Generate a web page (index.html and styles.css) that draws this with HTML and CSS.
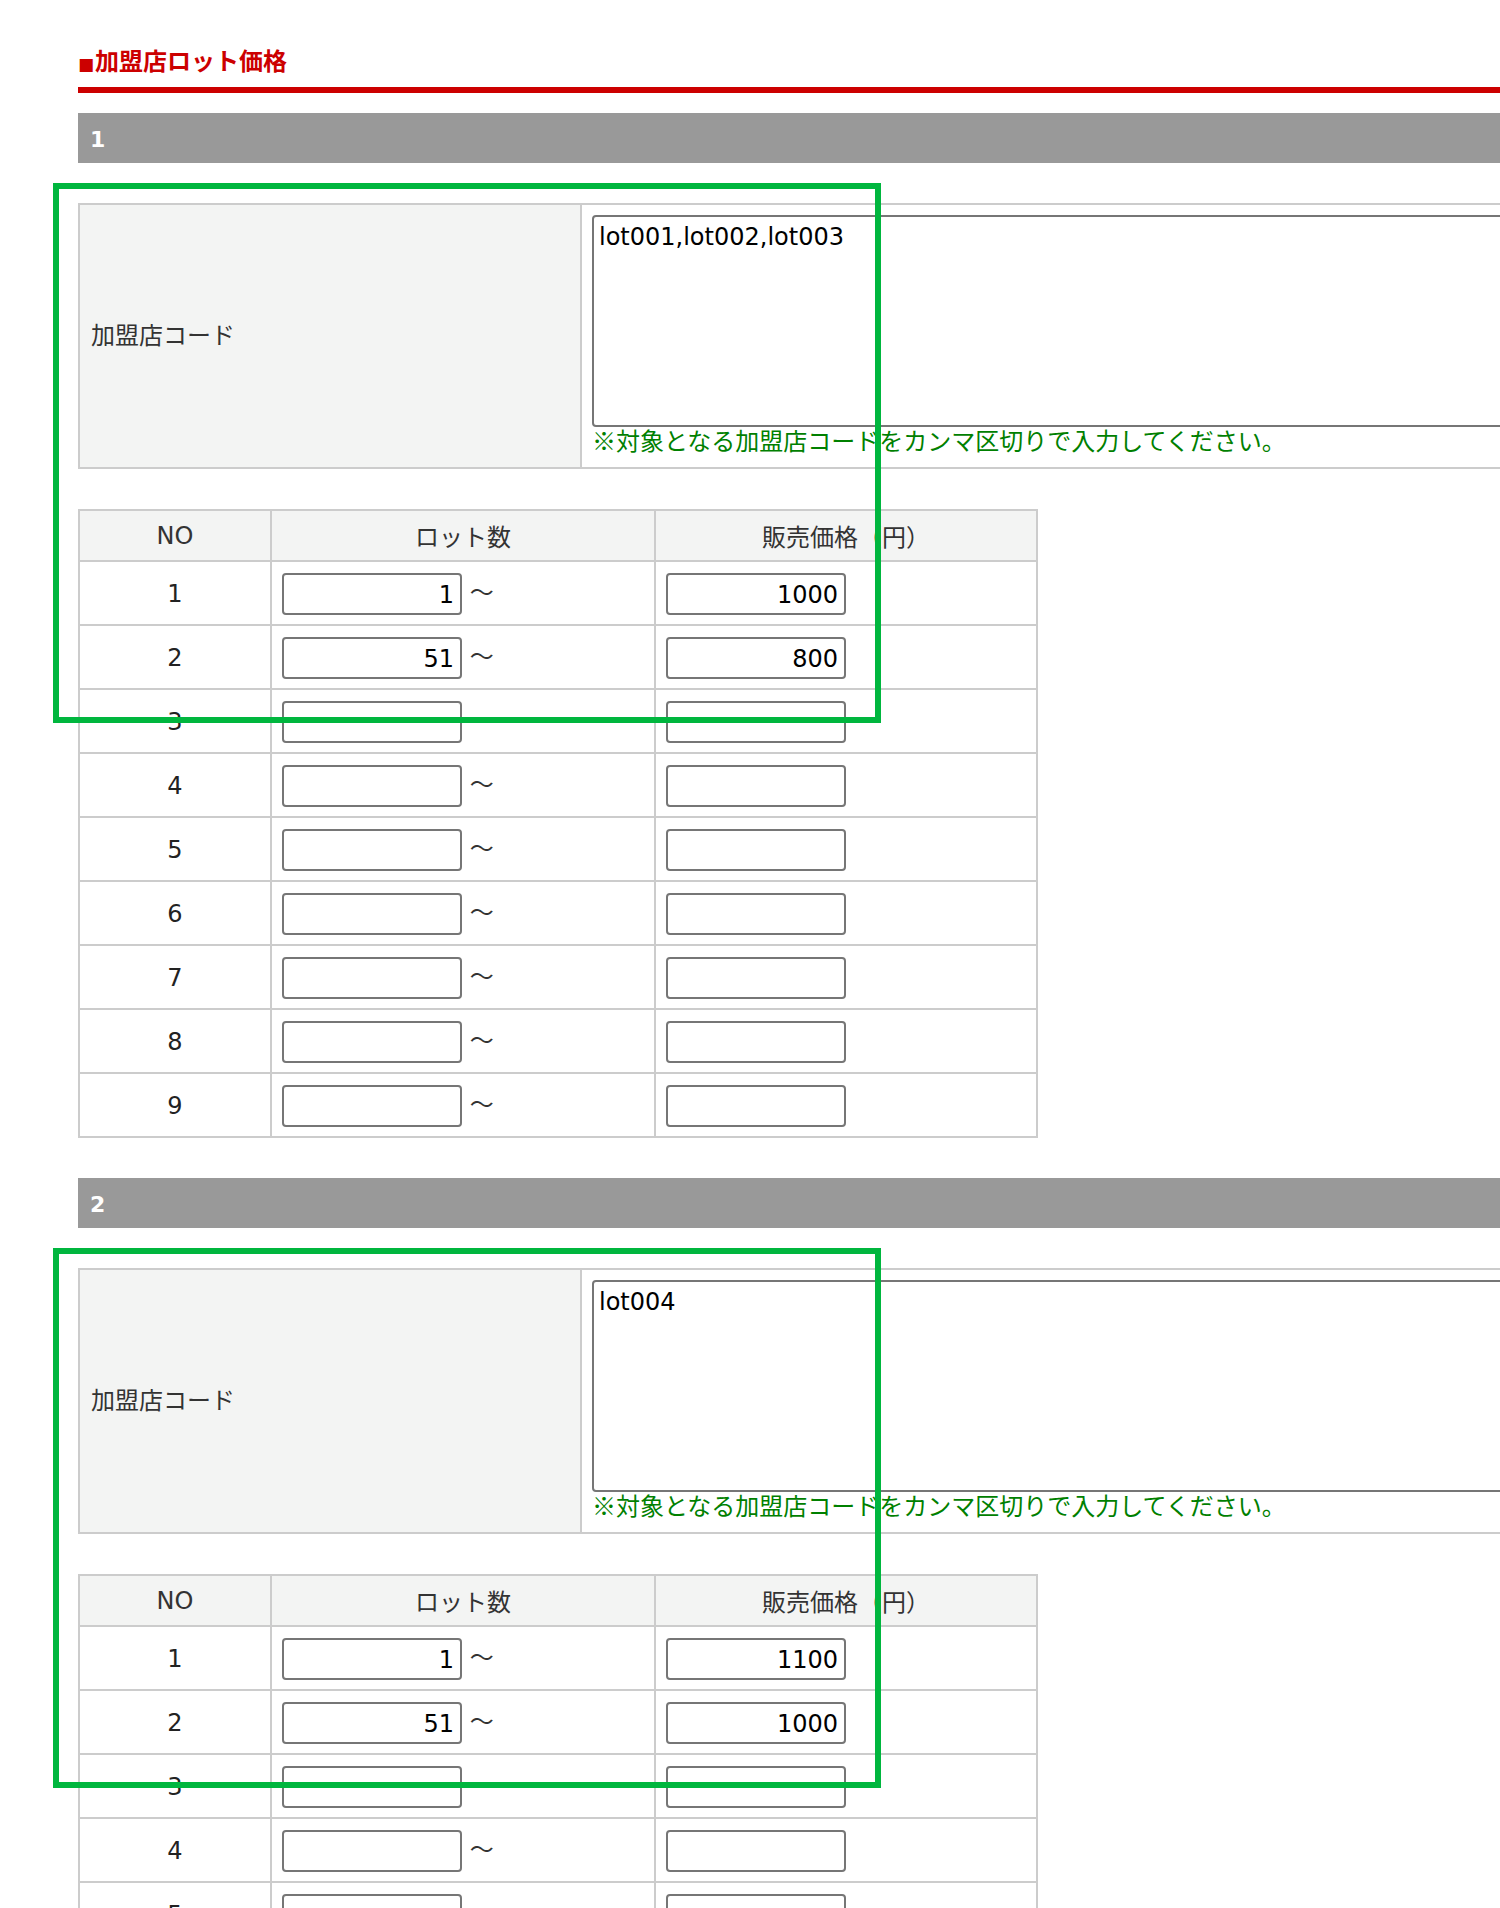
FILE: index.html
```html
<!DOCTYPE html>
<html lang="ja">
<head>
    <meta charset="UTF-8">
    <meta name="viewport" content="width=device-width, initial-scale=1.0">
    <title>加盟店ロット価格</title>
    <link rel="stylesheet" href="styles.css">
</head>
<body>
<div class="page">

    <!-- Title -->
    <h2 class="page-title"><span class="mark">■</span>加盟店ロット価格</h2>

    <!-- Group 1 -->
    <div class="group-head">1</div>
    <div class="block">
        <table class="info-table">
            <tr>
                <th>加盟店コード</th>
                <td>
                    <textarea class="codes">lot001,lot002,lot003</textarea>
                    <p class="note">※対象となる加盟店コードをカンマ区切りで入力してください。</p>
                </td>
            </tr>
        </table>

        <table class="lot-table">
            <tr>
                <th class="col-no">NO</th>
                <th class="col-lot">ロット数</th>
                <th>販売価格（円）</th>
            </tr>
            <tr><td class="no">1</td><td><input type="text" class="num" value="1"> 〜</td><td><input type="text" class="num" value="1000"></td></tr>
            <tr><td class="no">2</td><td><input type="text" class="num" value="51"> 〜</td><td><input type="text" class="num" value="800"></td></tr>
            <tr><td class="no">3</td><td><input type="text" class="num"> 〜</td><td><input type="text" class="num"></td></tr>
            <tr><td class="no">4</td><td><input type="text" class="num"> 〜</td><td><input type="text" class="num"></td></tr>
            <tr><td class="no">5</td><td><input type="text" class="num"> 〜</td><td><input type="text" class="num"></td></tr>
            <tr><td class="no">6</td><td><input type="text" class="num"> 〜</td><td><input type="text" class="num"></td></tr>
            <tr><td class="no">7</td><td><input type="text" class="num"> 〜</td><td><input type="text" class="num"></td></tr>
            <tr><td class="no">8</td><td><input type="text" class="num"> 〜</td><td><input type="text" class="num"></td></tr>
            <tr><td class="no">9</td><td><input type="text" class="num"> 〜</td><td><input type="text" class="num"></td></tr>
        </table>

        <!-- highlight frame -->
        <div class="highlight"></div>
    </div>

    <!-- Group 2 -->
    <div class="group-head">2</div>
    <div class="block">
        <table class="info-table">
            <tr>
                <th>加盟店コード</th>
                <td>
                    <textarea class="codes">lot004</textarea>
                    <p class="note">※対象となる加盟店コードをカンマ区切りで入力してください。</p>
                </td>
            </tr>
        </table>

        <table class="lot-table">
            <tr>
                <th class="col-no">NO</th>
                <th class="col-lot">ロット数</th>
                <th>販売価格（円）</th>
            </tr>
            <tr><td class="no">1</td><td><input type="text" class="num" value="1"> 〜</td><td><input type="text" class="num" value="1100"></td></tr>
            <tr><td class="no">2</td><td><input type="text" class="num" value="51"> 〜</td><td><input type="text" class="num" value="1000"></td></tr>
            <tr><td class="no">3</td><td><input type="text" class="num"> 〜</td><td><input type="text" class="num"></td></tr>
            <tr><td class="no">4</td><td><input type="text" class="num"> 〜</td><td><input type="text" class="num"></td></tr>
            <tr><td class="no">5</td><td><input type="text" class="num"> 〜</td><td><input type="text" class="num"></td></tr>
            <tr><td class="no">6</td><td><input type="text" class="num"> 〜</td><td><input type="text" class="num"></td></tr>
            <tr><td class="no">7</td><td><input type="text" class="num"> 〜</td><td><input type="text" class="num"></td></tr>
            <tr><td class="no">8</td><td><input type="text" class="num"> 〜</td><td><input type="text" class="num"></td></tr>
            <tr><td class="no">9</td><td><input type="text" class="num"> 〜</td><td><input type="text" class="num"></td></tr>
        </table>

        <div class="highlight"></div>
    </div>

</div>
</body>
</html>
```

FILE: styles.css
```css
/* General page styles */
html, body {
    margin: 0;
    padding: 0;
    background: #fff;
    color: #333;
    font-family: "DejaVu Sans", "Noto Sans CJK JP", sans-serif;
    font-size: 24px;
    overflow: hidden; /* the page is wider than the window */
}

.page {
    width: 1700px;
    padding: 42px 0 0 78px;
}

/* Title */
.page-title {
    margin: 0;
    padding-bottom: 9px;
    border-bottom: 6px solid #cc0000;
    color: #cc0000;
    font-family: "Noto Sans CJK JP", sans-serif;
    font-size: 24px;
    line-height: 36px;
    font-weight: bold;
}

.page-title .mark {
    font-family: "DejaVu Sans", sans-serif;
    font-size: 17px;
    line-height: 1;
    margin-right: 1px;
}

/* Grey group bar */
.group-head {
    margin-top: 20px;
    height: 50px;
    line-height: 53px;
    padding-left: 12px;
    background: #999;
    color: #fff;
    font-size: 22px;
    font-weight: bold;
}

.block {
    position: relative;
    margin-top: 40px;
    margin-bottom: 40px;
}

.block + .group-head {
    margin-top: 0;
}

/* Tables */
table {
    border-collapse: separate;
    border-spacing: 0;
    border-top: 2px solid #ccc;
    border-left: 2px solid #ccc;
}

th, td {
    border-right: 2px solid #ccc;
    border-bottom: 2px solid #ccc;
    font-weight: normal;
    padding: 0;
}

th {
    background: #f3f4f3;
}

/* Shop code table */
.info-table {
    width: 1600px;
}

.info-table th {
    width: 502px;
    box-sizing: border-box;
    text-align: left;
    vertical-align: middle;
    padding-left: 11px;
    padding-bottom: 6px;
    font-family: "Noto Sans CJK JP", sans-serif;
}

.info-table td {
    padding: 10px 10px 14px 10px;
    vertical-align: top;
}

.codes {
    display: block;
    width: 100%;
    height: 212px;
    box-sizing: border-box;
    margin: 0;
    padding: 6px 5px;
    border: 2px solid #767676;
    border-radius: 4px;
    font-family: "DejaVu Sans", "Noto Sans CJK JP", sans-serif;
    font-size: 24px;
    color: #000;
    resize: none;
}

.note {
    margin: 0;
    line-height: 26px;
    color: #008000;
    font-family: "Noto Sans CJK JP", sans-serif;
}

/* Lot price table */
.lot-table {
    margin-top: 40px;
    width: 960px;
    table-layout: fixed;
    box-sizing: border-box;
}

.lot-table th {
    height: 51px;
    box-sizing: border-box;
    text-align: center;
    vertical-align: middle;
}

.lot-table .col-no {
    width: 192px;
}

.lot-table .col-lot {
    width: 384px;
}

.lot-table td {
    height: 64px;
    box-sizing: border-box;
    padding: 2px 10px 0;
    vertical-align: middle;
    white-space: nowrap;
}

.lot-table td.no {
    text-align: center;
    color: #222;
}

.num {
    width: 180px;
    height: 42px;
    box-sizing: border-box;
    margin: 0;
    padding: 2px 6px 0;
    border: 2px solid #767676;
    border-radius: 4px;
    font-family: "DejaVu Sans", sans-serif;
    font-size: 24px;
    color: #000;
    text-align: right;
    vertical-align: middle;
}

/* Green frame drawn over the first rows */
.highlight {
    position: absolute;
    top: -20px;
    left: -25px;
    width: 828px;
    height: 540px;
    box-sizing: border-box;
    border: 6px solid #00b63e;
    pointer-events: none;
}
```
